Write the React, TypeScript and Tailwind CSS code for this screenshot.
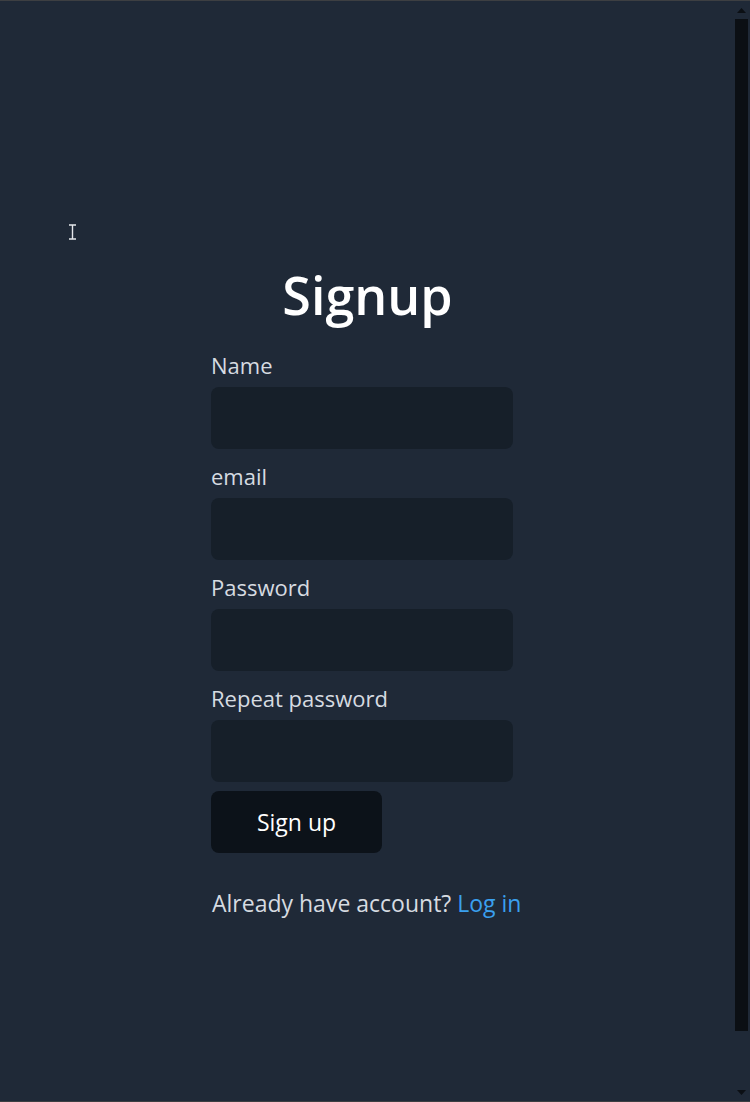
import React from "react";

const FIELDS = ["Name", "email", "Password", "Repeat password"];

/* --- fake page scrollbar --------------------------------------------- */
function ScrollBar() {
  return (
    <div className="flex w-[15px] shrink-0 flex-col items-center pr-[2px]">
      <svg width="9" height="6" viewBox="0 0 9 6" className="mt-[7px]">
        <path d="M4.5 0 L9 5 L0 5 Z" fill="#0b0f14" />
      </svg>
      <div className="mt-[5px] h-[1012px] w-[13px] bg-[#0b0f14]" />
      <div className="flex-1" />
      <svg width="9" height="6" viewBox="0 0 9 6" className="mb-[5px]">
        <path d="M0 0 L9 0 L4.5 5 Z" fill="#0b0f14" />
      </svg>
    </div>
  );
}

export default function App() {
  return (
    <div
      className="relative flex h-[1102px] w-[750px] overflow-hidden border-y border-[#3d3f42] bg-[#1f2937]"
      style={{ fontFamily: '"Open Sans", "Noto Sans", sans-serif' }}
    >
      {/* mouse text cursor */}
      <svg width="9" height="16" viewBox="0 0 9 16" className="absolute left-[68px] top-[223px]">
        <path d="M1 1 H8 M4.5 1 V15 M1 15 H8" stroke="#e5e7eb" strokeWidth="1.4" fill="none" />
      </svg>

      <main className="flex-1 pt-[262px]">
        <h1 className="text-center text-[52px] font-semibold leading-[64px] text-white">Signup</h1>

        <form className="mx-auto mt-[23px] w-[313px]" onSubmit={(e) => e.preventDefault()}>
          {FIELDS.map((label) => (
            <div key={label} className="mb-[12px]">
              <label className="block text-[22px] leading-[30px] text-[#d6dbe1]">{label}</label>
              <input
                type={label.toLowerCase().includes("password") ? "password" : "text"}
                className="mt-[7px] block h-[62px] w-[302px] rounded-lg bg-[#161f29] px-3 text-[20px] text-white outline-none"
              />
            </div>
          ))}

          <button
            type="submit"
            className="mt-[-3px] h-[62px] w-[171px] rounded-lg bg-[#0c1219] text-[23px] leading-[30px] text-white"
          >
            Sign up
          </button>

          <p className="mt-[35px] whitespace-nowrap pl-px text-[23px] leading-[30px] text-[#d6dbe1]">
            Already have account? <a href="#" className="text-[#3aa0ef]">Log in</a>
          </p>
        </form>
      </main>

      <ScrollBar />
    </div>
  );
}
